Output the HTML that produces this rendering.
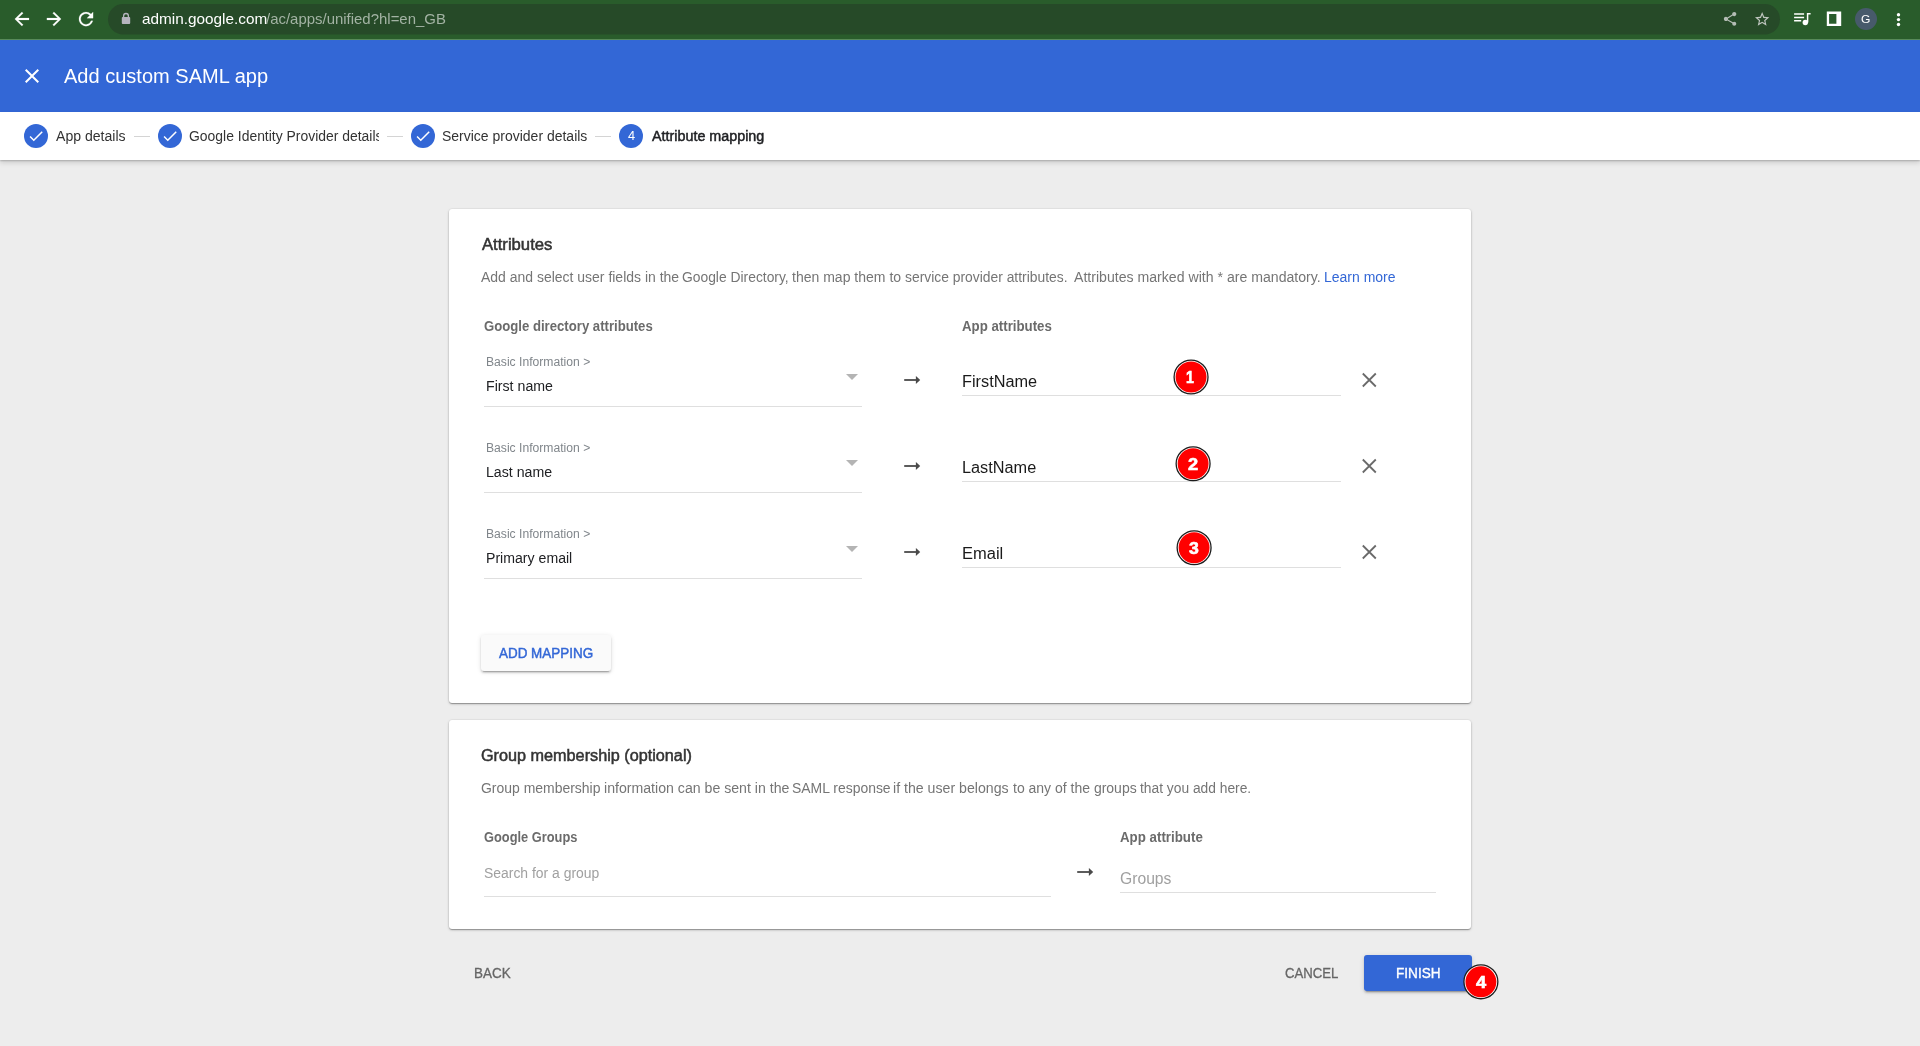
<!DOCTYPE html>
<html><head><meta charset="utf-8">
<style>
*{margin:0;padding:0;box-sizing:border-box}
html,body{width:1920px;height:1046px;overflow:hidden;background:#ededed;font-family:"Liberation Sans",sans-serif;}
.abs{position:absolute}
.t{position:absolute;white-space:nowrap;line-height:1;transform-origin:0 0}
#tx{position:absolute;left:0;top:0;width:1920px;height:1046px;will-change:transform}
#chrome{position:absolute;left:0;top:0;width:1920px;height:40px;background:#295c2b}
#chromeline{position:absolute;left:0;top:39px;width:1920px;height:1px;background:#588a5a}
#hdr{position:absolute;left:0;top:40px;width:1920px;height:72px;background:#3367d6}
#stepper{position:absolute;left:0;top:112px;width:1920px;height:48px;background:#fff;box-shadow:0 1px 1.500px rgba(0,0,0,.2),0 3px 5px rgba(0,0,0,.13)}
.card{position:absolute;left:449px;width:1022px;background:#fff;border-radius:3px;box-shadow:0 1px 1px 0 rgba(0,0,0,.16),0 2px 1px -1px rgba(0,0,0,.13),0 1px 3px 0 rgba(0,0,0,.2),0 0 0 0.500px rgba(0,0,0,.05)}
.step{position:absolute;top:124px;width:24px;height:24px;border-radius:50%;background:#3367d6}
.conn{position:absolute;top:136px;height:1px;width:16px;background:#d4d4d4}
.ul{position:absolute;height:1px;background:#dfdfdf}
.tri{position:absolute;width:0;height:0;border-left:6px solid transparent;border-right:6px solid transparent;border-top:6px solid #b4b4b4}
.bd{position:absolute;width:20px;height:20px;line-height:20px;text-align:center;font-size:16px;font-weight:bold;color:#fff;-webkit-text-stroke:0.600px #fff;transform:translateX(0.300px) scaleX(1.070);will-change:transform}
</style></head><body>
<div id="chrome"></div><div id="chromeline"></div>
<svg class="abs" style="left:0;top:0" width="1920" height="40"><rect x="108" y="4" width="1672" height="30.500" rx="15.250" fill="#264a28"/></svg>
<div id="hdr"></div>
<div id="stepper"></div>
<div class="card" id="c1" style="top:209px;height:493.500px"></div>
<div class="card" id="c2" style="top:720px;height:208.500px"></div>

<!-- chrome icons -->
<svg class="abs" style="left:0;top:0" width="1920" height="40" viewBox="0 0 1920 40">
<g transform="translate(11.250 8.350) scale(0.8875)"><path d="M20 11H7.830l5.590-5.590L12 4l-8 8 8 8 1.410-1.410L7.830 13H20v-2z" fill="#fff" stroke="#fff" stroke-width="0.250"/></g>
<g transform="translate(43.350 8.350) scale(0.8875)"><path d="M12 4l-1.410 1.410L16.170 11H4v2h12.170l-5.580 5.590L12 20l8-8z" fill="#fff" stroke="#fff" stroke-width="0.250"/></g>
<g transform="translate(75.400 8.450) scale(0.885)"><path d="M17.650 6.350A7.958 7.958 0 0012 4c-4.420 0-7.990 3.580-7.990 8s3.570 8 7.990 8c3.730 0 6.840-2.550 7.730-6h-2.080A5.990 5.990 0 0112 18c-3.310 0-6-2.690-6-6s2.690-6 6-6c1.660 0 3.140.69 4.220 1.780L13 11h7V4l-2.350 2.350z" fill="#fff" stroke="#fff" stroke-width="0.200"/></g>
<rect x="121.800" y="17" width="8.400" height="6.900" rx="0.900" fill="#b5b5be"/><path d="M123.600 17.500v-1.600a2.400 2.400 0 0 1 4.800 0v1.600" stroke="#b5b5be" stroke-width="1.300" fill="none"/>
<g transform="translate(1721.780 10.610) scale(0.693)"><path d="M18 16.080c-.76 0-1.440.3-1.960.77L8.910 12.700c.05-.23.09-.46.09-.7s-.04-.47-.09-.7l7.050-4.110c.54.5 1.250.81 2.040.81 1.660 0 3-1.340 3-3s-1.340-3-3-3-3 1.340-3 3c0 .24.04.47.09.7L8.040 9.810C7.500 9.310 6.790 9 6 9c-1.660 0-3 1.340-3 3s1.340 3 3 3c.79 0 1.500-.31 2.040-.81l7.120 4.160c-.05.21-.08.43-.08.65 0 1.610 1.310 2.920 2.920 2.920s2.920-1.310 2.920-2.920-1.310-2.920-2.920-2.920z" fill="#b4bcb5"/></g>
<g transform="translate(1753.570 10.680) scale(0.715)"><path d="M22 9.240l-7.190-.62L12 2 9.190 8.630 2 9.240l5.460 4.730L5.820 21 12 17.270 18.180 21l-1.630-7.030L22 9.240zM12 15.400l-3.760 2.270 1-4.280-3.320-2.880 4.380-.38L12 6.100l1.710 4.040 4.380.38-3.320 2.880 1 4.280L12 15.400z" fill="#c0c6c0"/></g>
<g transform="translate(1790.400 9.200)"><path d="M3.700 4.700h10M3.700 8.200h10M3.700 11.600h7.100" stroke="#fff" stroke-width="1.500" fill="none"/><path d="M17.200 3.800v9.500M17.200 4.500h3" stroke="#fff" stroke-width="1.500" fill="none"/><circle cx="14.900" cy="13.300" r="2.700" fill="#fff"/></g>
<g transform="translate(1824 9)"><path d="M2.800 2.500h14.400v14.600H2.800zM5.100 5h7.300v9.800H5.100z" fill="#fff" fill-rule="evenodd"/></g>
<circle cx="1866" cy="19" r="11" fill="#475a6b"/>
<circle cx="1898.500" cy="14.700" r="1.700" fill="#fff"/><circle cx="1898.500" cy="19.600" r="1.700" fill="#fff"/><circle cx="1898.500" cy="24.500" r="1.700" fill="#fff"/>
</svg>

<!-- header -->
<svg class="abs" style="left:20px;top:64px" width="24" height="24" viewBox="0 0 24 24"><path d="M19 6.410L17.590 5 12 10.590 6.410 5 5 6.410 10.590 12 5 17.590 6.410 19 12 13.410 17.590 19 19 17.590 13.410 12z" fill="#fff"/></svg>

<!-- stepper -->
<div class="step" style="left:24px"></div><div class="step" style="left:158px"></div><div class="step" style="left:411px"></div><div class="step" style="left:619px"></div>
<svg class="abs" style="left:27px;top:127px" width="18" height="18" viewBox="0 0 24 24"><path d="M9 16.170L4.830 12l-1.420 1.410L9 19 21 7l-1.410-1.410z" fill="#fff"/></svg>
<svg class="abs" style="left:161px;top:127px" width="18" height="18" viewBox="0 0 24 24"><path d="M9 16.170L4.830 12l-1.420 1.410L9 19 21 7l-1.410-1.410z" fill="#fff"/></svg>
<svg class="abs" style="left:414px;top:127px" width="18" height="18" viewBox="0 0 24 24"><path d="M9 16.170L4.830 12l-1.420 1.410L9 19 21 7l-1.410-1.410z" fill="#fff"/></svg>
<div class="conn" style="left:134px"></div><div class="conn" style="left:387px"></div><div class="conn" style="left:595px"></div>


<div class="ul" style="left:484px;top:406px;width:378px"></div>
<div class="tri" style="left:846px;top:374px"></div>
<svg class="abs arr" style="left:903px;top:374px" width="18" height="12" viewBox="0 0 18 12"><path d="M1.200 6H14" stroke="#4a4a4a" stroke-width="1.800" fill="none"/><path d="M12.900 2L17.200 6L12.900 10Z" fill="#4a4a4a"/></svg>
<div class="ul" style="left:962px;top:395px;width:379px"></div>
<svg class="abs" style="left:1361px;top:372px" width="16" height="16" viewBox="0 0 16 16"><path d="M1.800 1.500L14.800 14.500M14.800 1.500L1.800 14.500" stroke="#6a6a6a" stroke-width="1.800" fill="none"/></svg>

<div class="ul" style="left:484px;top:492px;width:378px"></div>
<div class="tri" style="left:846px;top:460px"></div>
<svg class="abs arr" style="left:903px;top:460px" width="18" height="12" viewBox="0 0 18 12"><path d="M1.200 6H14" stroke="#4a4a4a" stroke-width="1.800" fill="none"/><path d="M12.900 2L17.200 6L12.900 10Z" fill="#4a4a4a"/></svg>
<div class="ul" style="left:962px;top:481px;width:379px"></div>
<svg class="abs" style="left:1361px;top:458px" width="16" height="16" viewBox="0 0 16 16"><path d="M1.800 1.500L14.800 14.500M14.800 1.500L1.800 14.500" stroke="#6a6a6a" stroke-width="1.800" fill="none"/></svg>

<div class="ul" style="left:484px;top:578px;width:378px"></div>
<div class="tri" style="left:846px;top:546px"></div>
<svg class="abs arr" style="left:903px;top:546px" width="18" height="12" viewBox="0 0 18 12"><path d="M1.200 6H14" stroke="#4a4a4a" stroke-width="1.800" fill="none"/><path d="M12.900 2L17.200 6L12.900 10Z" fill="#4a4a4a"/></svg>
<div class="ul" style="left:962px;top:567px;width:379px"></div>
<svg class="abs" style="left:1361px;top:544px" width="16" height="16" viewBox="0 0 16 16"><path d="M1.800 1.500L14.800 14.500M14.800 1.500L1.800 14.500" stroke="#6a6a6a" stroke-width="1.800" fill="none"/></svg>


<div class="abs" style="left:481px;top:635px;width:130px;height:36px;background:#fafafa;border-radius:3px;box-shadow:0 3px 1px -2px rgba(0,0,0,.2),0 2px 2px 0 rgba(0,0,0,.14),0 1px 5px 0 rgba(0,0,0,.12)"></div>

<!-- card 2 -->
<div class="ul" style="left:484px;top:896px;width:567px"></div>
<svg class="abs arr" style="left:1076px;top:866px" width="18" height="12" viewBox="0 0 18 12"><path d="M1.200 6H14" stroke="#4a4a4a" stroke-width="1.800" fill="none"/><path d="M12.900 2L17.200 6L12.900 10Z" fill="#4a4a4a"/></svg>
<div class="ul" style="left:1120px;top:892px;width:316px"></div>

<!-- footer buttons -->
<div class="abs" style="left:1364px;top:955px;width:108px;height:36px;background:#3367d6;border-radius:3px;box-shadow:0 3px 1px -2px rgba(0,0,0,.2),0 2px 2px 0 rgba(0,0,0,.14),0 1px 5px 0 rgba(0,0,0,.12)"></div>

<!-- badges -->
<svg class="abs" style="left:1171px;top:357px" width="40" height="40" viewBox="0 0 40 40"><circle cx="20.05" cy="20.00" r="16.950" fill="#fff" stroke="#1c1c1c" stroke-width="1.300"/><circle cx="20.05" cy="20.00" r="15.450" fill="#ff0000"/></svg>
<svg class="abs" style="left:1173px;top:443px" width="40" height="40" viewBox="0 0 40 40"><circle cx="20.10" cy="20.75" r="16.950" fill="#fff" stroke="#1c1c1c" stroke-width="1.300"/><circle cx="20.10" cy="20.75" r="15.450" fill="#ff0000"/></svg>
<svg class="abs" style="left:1174px;top:527px" width="40" height="40" viewBox="0 0 40 40"><circle cx="20.10" cy="20.75" r="16.950" fill="#fff" stroke="#1c1c1c" stroke-width="1.300"/><circle cx="20.10" cy="20.75" r="15.450" fill="#ff0000"/></svg>
<svg class="abs" style="left:1460px;top:961px" width="40" height="40" viewBox="0 0 40 40"><circle cx="20.90" cy="20.80" r="16.950" fill="#fff" stroke="#1c1c1c" stroke-width="1.300"/><circle cx="20.90" cy="20.80" r="15.450" fill="#ff0000"/></svg>
<div id="tx">
<div class="t" id="url1" style="left:141.85px;top:11.30px;font-size:15px;color:#ffffff;transform:scaleX(1.0218);">admin.google.com</div>
<div class="t" id="url2" style="left:266.47px;top:11.30px;font-size:15px;color:#a3b3a4;transform:scaleX(0.9963);">/ac/apps/unified?hl=en_GB</div>
<div class="t" id="av" style="left:1860.99px;top:14.11px;font-size:10.5px;color:#ffffff;transform:scaleX(1.1485);">G</div>
<div class="t" id="title" style="left:64.14px;top:66.07px;font-size:20px;color:#ffffff;transform:scaleX(1.0011);">Add custom SAML app</div>
<div class="t" id="s1" style="left:55.92px;top:129.15px;font-size:14px;color:#333333;transform:scaleX(1.0045);">App details</div>
<div class="t" id="s2" style="left:189.17px;top:129.15px;font-size:14px;color:#333333;transform:scaleX(0.9946);">Google Identity Provider details</div>
<div class="t" id="s3" style="left:441.59px;top:129.15px;font-size:14px;color:#333333;transform:scaleX(0.9989);">Service provider details</div>
<div class="t" id="s4" style="left:651.69px;top:129.15px;font-size:14px;color:#202124;-webkit-text-stroke:0.45px #202124;transform:scaleX(1.0235);">Attribute mapping</div>
<div class="t" id="n4" style="left:627.66px;top:129.00px;font-size:13px;color:#ffffff;transform:scaleX(0.9838);">4</div>
<div class="t" id="h1" style="left:481.57px;top:237.46px;font-size:16px;color:#333333;-webkit-text-stroke:0.5px #333333;transform:scaleX(1.0409);">Attributes</div>
<div class="t" id="d1_0" style="left:481.12px;top:270.15px;font-size:14px;color:#757575;transform:scaleX(0.9980);">Add and select user fields in the</div>
<div class="t" id="d1_1" style="left:681.89px;top:270.15px;font-size:14px;color:#757575;transform:scaleX(0.9891);">Google Directory,</div>
<div class="t" id="d1_2" style="left:791.84px;top:270.15px;font-size:14px;color:#757575;transform:scaleX(1.0013);">then map them to</div>
<div class="t" id="d1_3" style="left:904.81px;top:270.15px;font-size:14px;color:#757575;transform:scaleX(0.9899);">service provider attributes.</div>
<div class="t" id="d1_4" style="left:1073.92px;top:270.15px;font-size:14px;color:#757575;transform:scaleX(1.0077);">Attributes marked with * are mandatory.</div>
<div class="t" id="d2_0" style="left:481.02px;top:781.15px;font-size:14px;color:#757575;transform:scaleX(0.9970);">Group membership</div>
<div class="t" id="d2_1" style="left:603.86px;top:781.15px;font-size:14px;color:#757575;transform:scaleX(1.0094);">information can be sent in the</div>
<div class="t" id="d2_2" style="left:791.99px;top:781.15px;font-size:14px;color:#757575;transform:scaleX(0.9950);">SAML response</div>
<div class="t" id="d2_3" style="left:893.10px;top:781.15px;font-size:14px;color:#757575;transform:scaleX(1.0104);">if the user belongs</div>
<div class="t" id="d2_4" style="left:1013.04px;top:781.15px;font-size:14px;color:#757575;transform:scaleX(0.9994);">to any of the groups</div>
<div class="t" id="d2_5" style="left:1140.17px;top:781.15px;font-size:14px;color:#757575;transform:scaleX(0.9851);">that you add here.</div>
<div class="t" id="lm" style="left:1323.94px;top:270.15px;font-size:14px;color:#3367d6;transform:scaleX(0.9994);">Learn more</div>
<div class="t" id="g1" style="left:484.08px;top:319.15px;font-size:14px;color:#6b6b6b;font-weight:bold;transform:scaleX(0.9390);">Google directory attributes</div>
<div class="t" id="g2" style="left:962.00px;top:319.15px;font-size:14px;color:#6b6b6b;font-weight:bold;transform:scaleX(0.9464);">App attributes</div>
<div class="t" id="bi0" style="left:486.01px;top:356.42px;font-size:12.5px;color:#80868b;transform:scaleX(0.9713);">Basic Information &gt;</div>
<div class="t" id="fn0" style="left:485.88px;top:379.15px;font-size:14px;color:#202124;transform:scaleX(1.0125);">First name</div>
<div class="t" id="an0" style="left:961.93px;top:374.46px;font-size:16px;color:#1a1a1a;transform:scaleX(1.0177);">FirstName</div>
<div class="t" id="bi1" style="left:486.01px;top:442.42px;font-size:12.5px;color:#80868b;transform:scaleX(0.9713);">Basic Information &gt;</div>
<div class="t" id="fn1" style="left:485.88px;top:465.15px;font-size:14px;color:#202124;transform:scaleX(1.0113);">Last name</div>
<div class="t" id="an1" style="left:961.93px;top:460.46px;font-size:16px;color:#1a1a1a;transform:scaleX(1.0179);">LastName</div>
<div class="t" id="bi2" style="left:486.01px;top:528.42px;font-size:12.5px;color:#80868b;transform:scaleX(0.9713);">Basic Information &gt;</div>
<div class="t" id="fn2" style="left:485.88px;top:551.15px;font-size:14px;color:#202124;transform:scaleX(1.0081);">Primary email</div>
<div class="t" id="an2" style="left:961.92px;top:546.46px;font-size:16px;color:#1a1a1a;transform:scaleX(1.0307);">Email</div>
<div class="t" id="am" style="left:499.26px;top:646.15px;font-size:14px;color:#3367d6;-webkit-text-stroke:0.45px #3367d6;transform:scaleX(0.9603);">ADD MAPPING</div>
<div class="t" id="h2" style="left:480.87px;top:748.46px;font-size:16px;color:#333333;-webkit-text-stroke:0.5px #333333;transform:scaleX(1.0134);">Group membership (optional)</div>
<div class="t" id="g3" style="left:484.14px;top:830.15px;font-size:14px;color:#6b6b6b;font-weight:bold;transform:scaleX(0.9162);">Google Groups</div>
<div class="t" id="g4" style="left:1119.58px;top:830.15px;font-size:14px;color:#6b6b6b;font-weight:bold;transform:scaleX(0.9506);">App attribute</div>
<div class="t" id="sg" style="left:483.72px;top:866.15px;font-size:14px;color:#a0a0a0;transform:scaleX(0.9937);">Search for a group</div>
<div class="t" id="gp" style="left:1119.92px;top:871.46px;font-size:16px;color:#a0a0a0;transform:scaleX(0.9804);">Groups</div>
<div class="t" id="bk" style="left:473.67px;top:966.15px;font-size:14px;color:#666666;-webkit-text-stroke:0.3px #666666;transform:scaleX(0.9615);">BACK</div>
<div class="t" id="cn" style="left:1285.14px;top:966.15px;font-size:14px;color:#666666;-webkit-text-stroke:0.3px #666666;transform:scaleX(0.9392);">CANCEL</div>
<div class="t" id="fi" style="left:1395.79px;top:966.15px;font-size:14px;color:#ffffff;-webkit-text-stroke:0.35px #ffffff;transform:scaleX(0.9712);">FINISH</div>
<div class="t" id="b1" style="left:1186.13px;top:370.06px;font-size:16px;color:#ffffff;font-weight:bold;-webkit-text-stroke:0.6px #ffffff;transform:scaleX(0.8878);">1</div>
<div class="t" id="b2" style="left:1188.29px;top:456.66px;font-size:16px;color:#ffffff;font-weight:bold;-webkit-text-stroke:0.6px #ffffff;transform:scaleX(1.1378);">2</div>
<div class="t" id="b3" style="left:1189.06px;top:540.66px;font-size:16px;color:#ffffff;font-weight:bold;-webkit-text-stroke:0.6px #ffffff;transform:scaleX(1.1004);">3</div>
<div class="t" id="b4" style="left:1476.20px;top:975.06px;font-size:16px;color:#ffffff;font-weight:bold;-webkit-text-stroke:0.6px #ffffff;transform:scaleX(1.1413);">4</div>
</div>
<div class="abs" style="left:379px;top:124px;width:8px;height:24px;background:#fff"></div>


</body></html>
